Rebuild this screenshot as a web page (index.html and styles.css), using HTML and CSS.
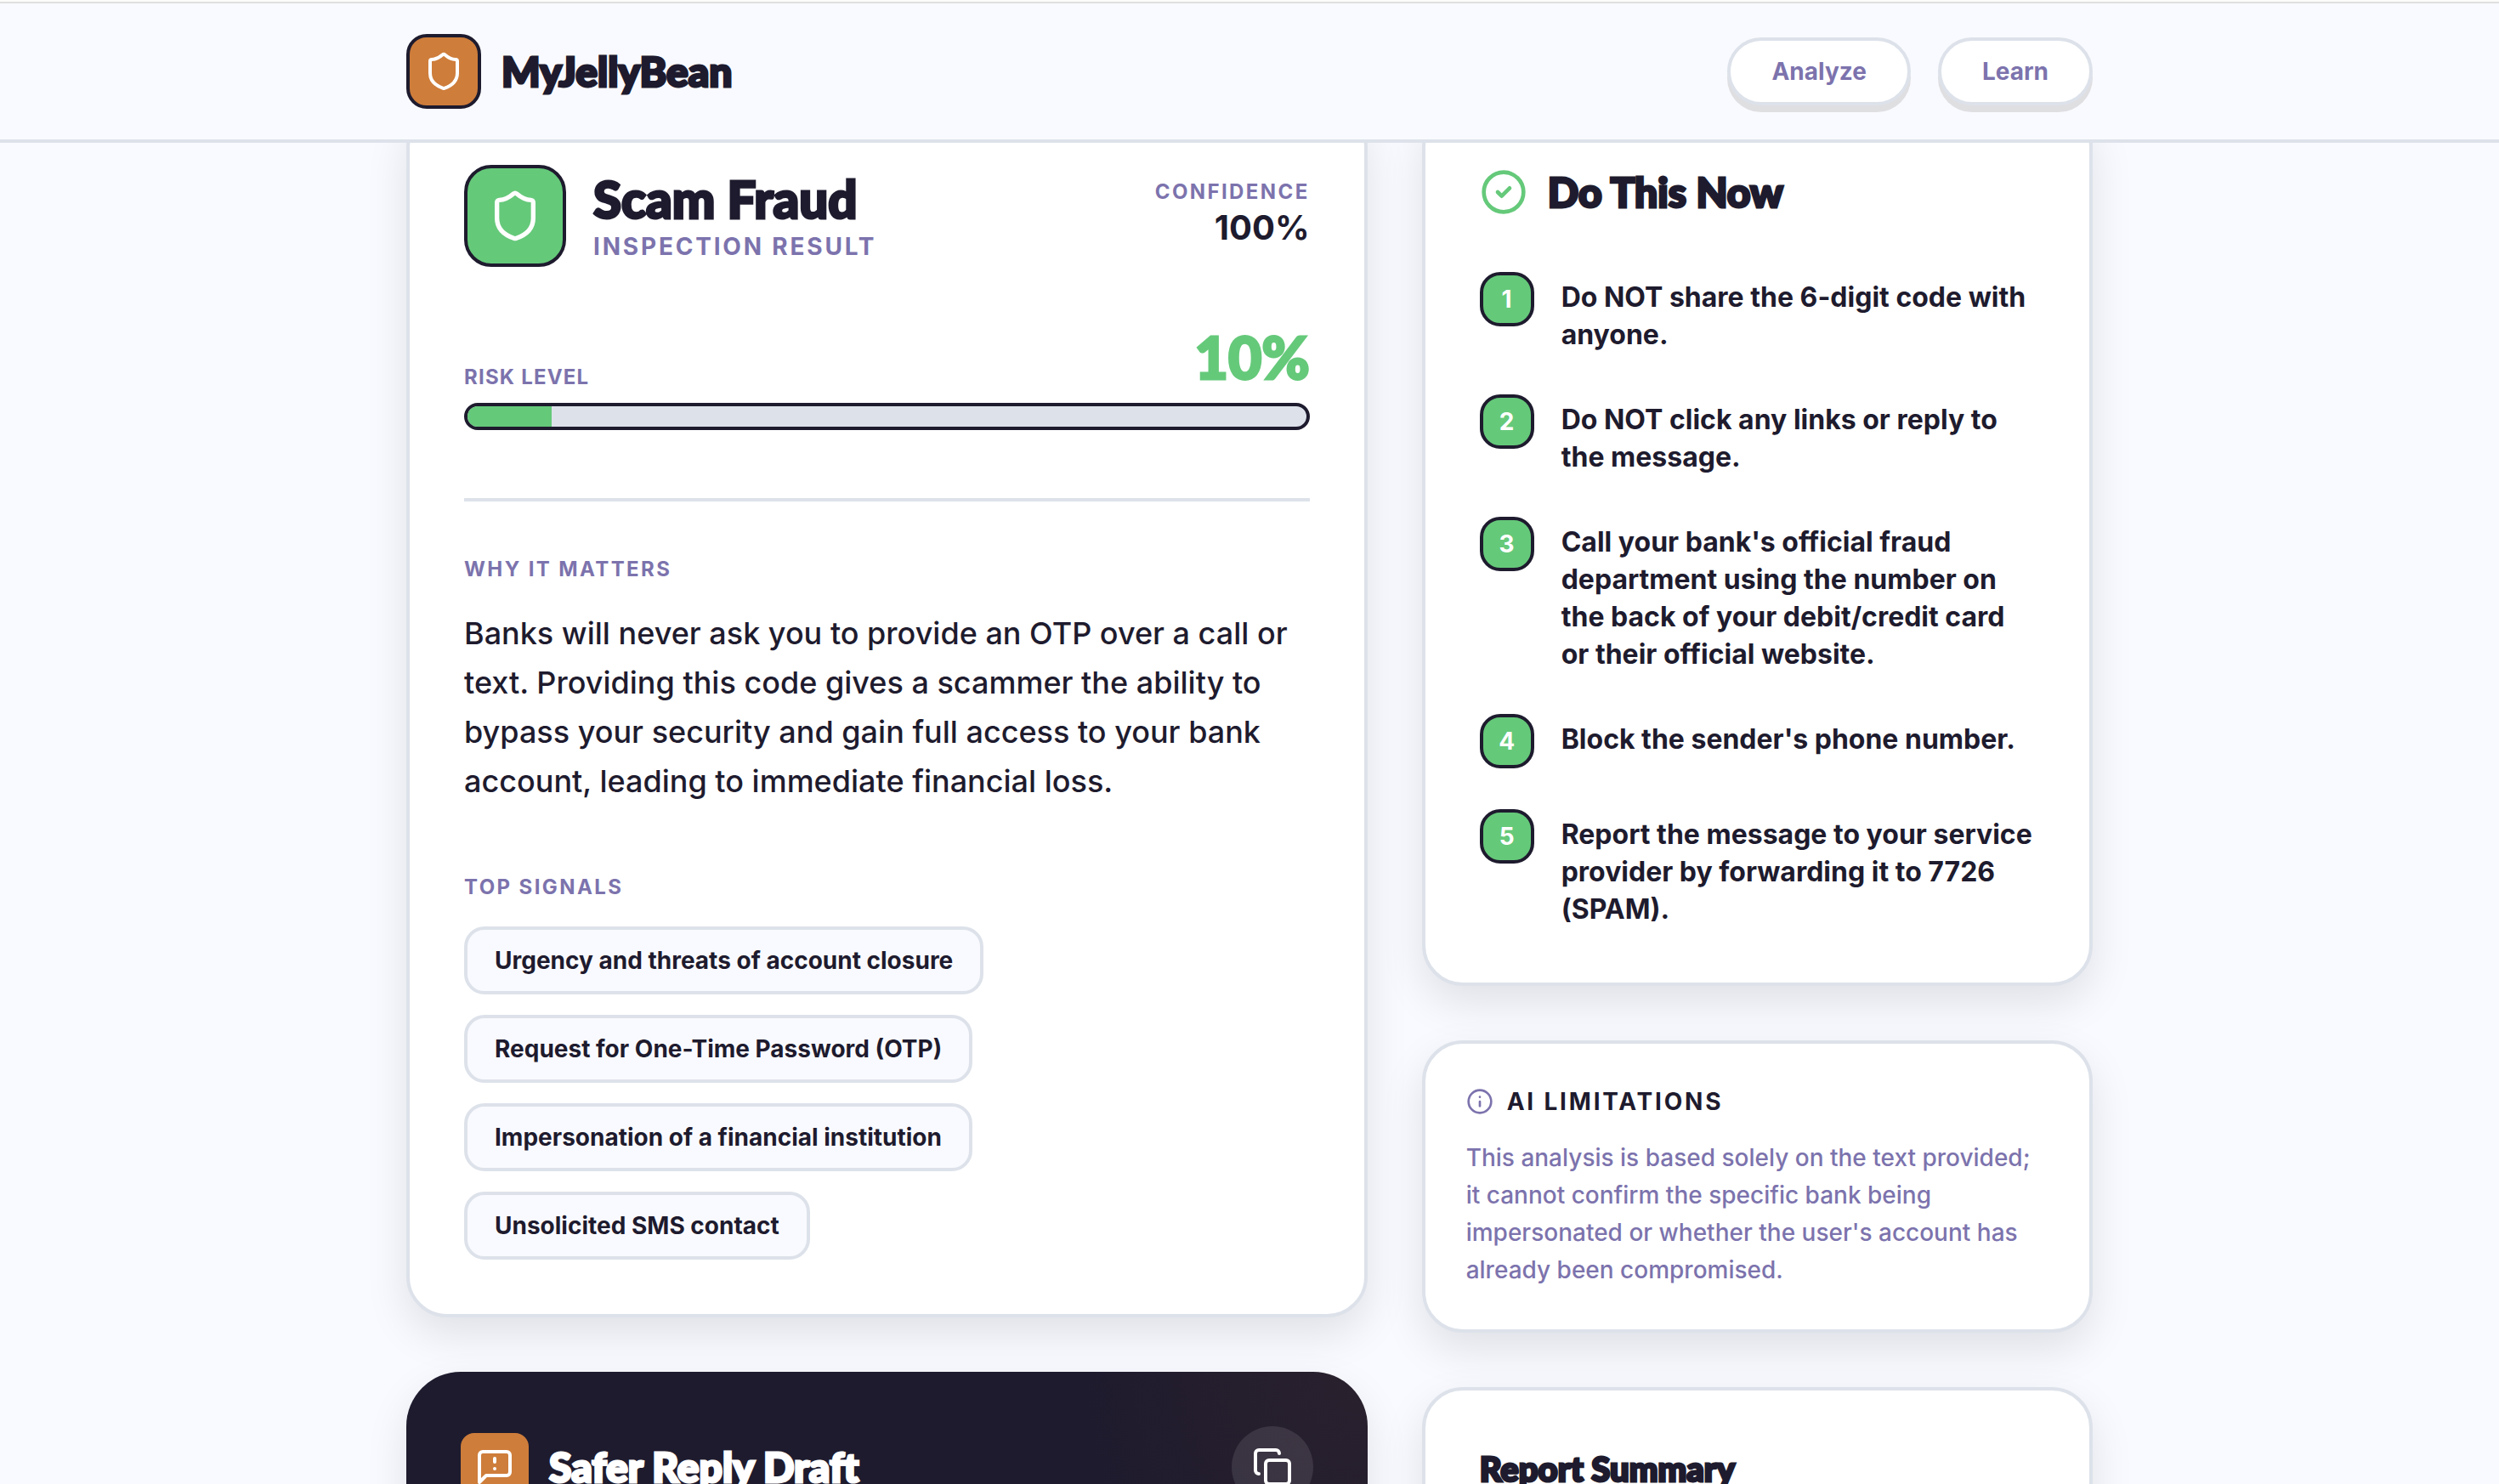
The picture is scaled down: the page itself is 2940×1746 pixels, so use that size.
FILE: index.html
```html
<!DOCTYPE html>
<html lang="en">
<head>
    <meta charset="UTF-8">
    <meta name="viewport" content="width=device-width, initial-scale=1.0">
    <title>MyJellyBean</title>
    <link rel="stylesheet" href="styles.css">
</head>
<body>

    <!-- Header -->
    <header class="site-header">
        <div class="header-inner">
            <a class="brand" href="#">
                <span class="brand-icon">
                    <svg class="icon" width="48" height="48" viewBox="0 0 24 24"><path d="M20 13c0 5-3.500 7.500-7.660 8.950a1 1 0 0 1-.67-.01C7.500 20.500 4 18 4 13V6a1 1 0 0 1 1-1c2 0 4.500-1.200 6.240-2.720a1.170 1.170 0 0 1 1.520 0C14.510 3.810 17 5 19 5a1 1 0 0 1 1 1z"/></svg>
                </span>
                <span class="brand-name">MyJellyBean</span>
            </a>
            <nav class="nav">
                <a class="nav-link" href="#analyze">Analyze</a>
                <a class="nav-link" href="#learn">Learn</a>
            </nav>
        </div>
    </header>

    <main class="results">
        <div class="col-main">

            <!-- Verdict -->
            <section class="card">
                <div class="verdict-head">
                    <span class="verdict-icon">
                        <svg class="icon" width="64" height="64" viewBox="0 0 24 24"><path d="M20 13c0 5-3.500 7.500-7.660 8.950a1 1 0 0 1-.67-.01C7.500 20.500 4 18 4 13V6a1 1 0 0 1 1-1c2 0 4.500-1.200 6.240-2.720a1.170 1.170 0 0 1 1.520 0C14.510 3.810 17 5 19 5a1 1 0 0 1 1 1z"/></svg>
                    </span>
                    <div class="verdict-title">
                        <h1>Scam Fraud</h1>
                        <p class="sub-label">Inspection Result</p>
                    </div>
                    <div class="confidence">
                        <p class="label">Confidence</p>
                        <p class="confidence-value">100%</p>
                    </div>
                </div>

                <div class="risk">
                    <div class="risk-head">
                        <span class="risk-label">Risk Level</span>
                        <span class="risk-value">10%</span>
                    </div>
                    <div class="risk-bar">
                        <div class="risk-fill" style="width: 10%"></div>
                    </div>
                </div>

                <div class="details">
                    <h2 class="label">Why It Matters</h2>
                    <p class="reason">Banks will never ask you to provide an OTP over a call or text. Providing this code gives a scammer the ability to bypass your security and gain full access to your bank account, leading to immediate financial loss.</p>

                    <h2 class="label">Top Signals</h2>
                    <ul class="signals">
                        <li>Urgency and threats of account closure</li>
                        <li>Request for One-Time Password (OTP)</li>
                        <li>Impersonation of a financial institution</li>
                        <li>Unsolicited SMS contact</li>
                    </ul>
                </div>
            </section>

            <!-- Reply draft -->
            <section class="reply-card">
                <div class="reply-head">
                    <span class="reply-icon">
                        <svg class="icon" width="48" height="48" viewBox="0 0 24 24"><path d="M21 15a2 2 0 0 1-2 2H7l-4 4V5a2 2 0 0 1 2-2h14a2 2 0 0 1 2 2z"/><path d="M12 7v2"/><path d="M12 13h.01"/></svg>
                    </span>
                    <h2 class="reply-title">Safer Reply Draft</h2>
                    <button type="button" class="copy-btn" aria-label="Copy reply">
                        <svg class="icon" width="48" height="48" viewBox="0 0 24 24"><rect width="14" height="14" x="8" y="8" rx="2"/><path d="M4 16c-1.100 0-2-.9-2-2V4c0-1.100.9-2 2-2h10c1.100 0 2 .9 2 2"/></svg>
                    </button>
                </div>
            </section>
        </div>

        <div class="col-side">

            <!-- Steps -->
            <section class="card">
                <h2 class="steps-title">
                    <svg class="icon icon-green" width="56" height="56" viewBox="0 0 24 24"><circle cx="12" cy="12" r="10"/><path d="m9 12 2 2 4-4"/></svg>
                    Do This Now
                </h2>
                <ol class="steps">
                    <li><span class="step-num">1</span><p>Do NOT share the 6-digit code with anyone.</p></li>
                    <li><span class="step-num">2</span><p>Do NOT click any links or reply to the message.</p></li>
                    <li><span class="step-num">3</span><p>Call your bank's official fraud department using the number on the back of your debit/credit card or their official website.</p></li>
                    <li><span class="step-num">4</span><p>Block the sender's phone number.</p></li>
                    <li><span class="step-num">5</span><p>Report the message to your service provider by forwarding it to 7726 (SPAM).</p></li>
                </ol>
            </section>

            <!-- Limitations -->
            <section class="card card-small">
                <h2 class="limits-title">
                    <svg class="icon icon-purple" width="32" height="32" viewBox="0 0 24 24"><circle cx="12" cy="12" r="10"/><path d="M12 16v-4"/><path d="M12 8h.01"/></svg>
                    AI Limitations
                </h2>
                <p class="limits-text">This analysis is based solely on the text provided; it cannot confirm the specific bank being impersonated or whether the user's account has already been compromised.</p>
            </section>

            <section class="card">
                <h2 class="summary-title">Report Summary</h2>
            </section>
        </div>
    </main>

</body>
</html>
```

FILE: styles.css
```css
:root {
    --bg: #f9faff;
    --ink: #1e1b2e;
    --muted: #7c73ad;
    --line: #dde2ea;
    --green: #65c97a;
    --orange: #ce7d3b;
    --display: "Lato", sans-serif;
    --shadow: 0 20px 50px rgba(0, 0, 0, 0.1);
}

* {
    box-sizing: border-box;
    margin: 0;
    padding: 0;
}

html,
body {
    height: 100%;
    overflow: hidden;
}

body {
    background: var(--bg);
    color: var(--ink);
    font-family: "Inter", sans-serif;
    font-size: 32px;
}

.icon {
    display: block;
    flex: none;
    fill: none;
    stroke: #fff;
    stroke-width: 2;
    stroke-linecap: round;
    stroke-linejoin: round;
}
.icon-green {
    stroke: var(--green);
}
.icon-purple {
    stroke: var(--muted);
}

/* chunky display headings */
.brand-name,
.verdict-title h1,
.risk-value,
.reply-title,
.steps-title,
.summary-title {
    -webkit-text-stroke: 3px currentColor;
    stroke-linejoin: round;
}

/* header */
.site-header {
    position: fixed;
    top: 0;
    left: 0;
    right: 0;
    z-index: 10;
    background: var(--bg);
    border-bottom: 4px solid var(--line);
}
.site-header::before {
    content: "";
    display: block;
    height: 2px;
    background: #fcfcfa;
    border-bottom: 2px solid #dfdfe0;
}
.header-inner {
    display: flex;
    align-items: center;
    justify-content: space-between;
    max-width: 2048px;
    height: 160px;
    margin: 0 auto;
    padding: 0 32px;
}
.brand {
    display: flex;
    align-items: center;
    gap: 24px;
    color: var(--ink);
    text-decoration: none;
}
.brand-icon {
    display: grid;
    place-items: center;
    width: 88px;
    height: 88px;
    background: var(--orange);
    border: 4px solid var(--ink);
    border-radius: 24px;
}
.brand-name {
    font: 900 48px/64px var(--display);
}
.nav {
    display: flex;
    gap: 32px;
}
.nav-link {
    padding: 16px 48px;
    background: #fff;
    border: 4px solid var(--line);
    border-radius: 40px;
    box-shadow: 0 8px 0 #dfdfe2;
    color: var(--muted);
    font-size: 28px;
    font-weight: 700;
    line-height: 40px;
    text-decoration: none;
}

/* layout */
.results {
    display: grid;
    grid-template-columns: repeat(12, 1fr);
    gap: 64px;
    max-width: 2048px;
    margin: 0 auto;
    padding: 124px 32px 64px;
}
.col-main,
.col-side {
    display: flex;
    flex-direction: column;
    gap: 64px;
}
.col-main {
    grid-column: span 7;
}
.col-side {
    grid-column: span 5;
}

.card {
    padding: 64px;
    background: #fff;
    border: 4px solid var(--line);
    border-radius: 48px;
    box-shadow: var(--shadow);
}
.card-small {
    padding: 48px;
}

.label {
    color: var(--muted);
    font-size: 24px;
    font-weight: 700;
    line-height: 32px;
    letter-spacing: 0.1em;
    text-transform: uppercase;
}

/* verdict */
.verdict-head {
    display: flex;
    align-items: center;
    gap: 32px;
    height: 124px;
}
.verdict-icon {
    display: grid;
    place-items: center;
    width: 120px;
    height: 120px;
    background: var(--green);
    border: 4px solid var(--ink);
    border-radius: 32px;
}
.verdict-title {
    padding-top: 4px;
}
.verdict-title h1 {
    margin-bottom: 4px;
    font: 900 60px/64px var(--display);
}
.sub-label {
    color: var(--muted);
    font-size: 28px;
    font-weight: 700;
    line-height: 40px;
    letter-spacing: 0.1em;
    text-transform: uppercase;
}
.confidence {
    align-self: flex-start;
    margin-left: auto;
    padding-top: 18px;
    text-align: right;
}
.confidence-value {
    font-size: 40px;
    font-weight: 700;
    line-height: 52px;
}

.risk {
    padding: 64px 0 80px;
}
.risk-head {
    display: flex;
    align-items: flex-end;
    justify-content: space-between;
    margin-bottom: 14px;
}
.risk-label {
    color: var(--muted);
    font-size: 24px;
    font-weight: 700;
    line-height: 32px;
    letter-spacing: 0.05em;
    text-transform: uppercase;
}
.risk-value {
    color: var(--green);
    font: 900 68px/80px var(--display);
}
.risk-bar {
    height: 32px;
    overflow: hidden;
    background: var(--line);
    border: 4px solid var(--ink);
    border-radius: 16px;
}
.risk-fill {
    height: 100%;
    background: var(--green);
}

.details {
    padding-top: 64px;
    border-top: 4px solid var(--line);
}
.details .label {
    margin-bottom: 30px;
}
.reason {
    margin-bottom: 80px;
    font-size: 36px;
    font-weight: 500;
    line-height: 58px;
}
.signals {
    display: flex;
    flex-wrap: wrap;
    gap: 24px;
    list-style: none;
}
.signals li {
    padding: 16px 32px;
    background: var(--bg);
    border: 4px solid var(--line);
    border-radius: 24px;
    font-size: 28px;
    font-weight: 700;
    line-height: 40px;
}

/* reply draft */
.reply-card {
    min-height: 480px;
    padding: 64px;
    background: radial-gradient(circle at 100% 0, #2a212e 0, #251e2d 150px, var(--ink) 340px);
    border-radius: 64px;
    box-shadow: var(--shadow);
    color: #fff;
}
.reply-head {
    display: flex;
    align-items: center;
    gap: 24px;
}
.reply-icon {
    display: grid;
    place-items: center;
    width: 80px;
    height: 80px;
    background: var(--orange);
    border-radius: 16px;
}
.reply-title {
    font: 900 48px/64px var(--display);
}
.copy-btn {
    display: grid;
    place-items: center;
    width: 96px;
    height: 96px;
    margin-left: auto;
    background: rgba(255, 255, 255, 0.1);
    border: none;
    border-radius: 50%;
    cursor: pointer;
}

/* steps */
.steps-title {
    display: flex;
    align-items: center;
    gap: 24px;
    margin-bottom: 60px;
    font: 900 48px/68px var(--display);
}
.steps {
    display: flex;
    flex-direction: column;
    gap: 48px;
    list-style: none;
}
.steps li {
    display: flex;
    align-items: flex-start;
    gap: 32px;
}
.step-num {
    display: grid;
    place-items: center;
    flex: none;
    width: 64px;
    height: 64px;
    background: var(--green);
    border: 4px solid var(--ink);
    border-radius: 24px;
    color: #fff;
    font-size: 28px;
    font-weight: 700;
}
.steps p {
    padding-top: 8px;
    font-weight: 700;
    line-height: 44px;
}

/* limitations */
.limits-title {
    display: flex;
    align-items: center;
    gap: 16px;
    margin-bottom: 24px;
    font-size: 28px;
    font-weight: 700;
    line-height: 40px;
    letter-spacing: 0.1em;
    text-transform: uppercase;
}
.limits-text {
    color: var(--muted);
    font-size: 28px;
    font-weight: 500;
    line-height: 44px;
}

.summary-title {
    height: 280px;
    font: 900 40px/56px var(--display);
}
```
